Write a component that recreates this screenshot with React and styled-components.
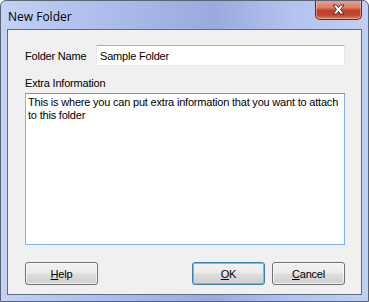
import styled, { createGlobalStyle } from "styled-components";

const GlobalStyle = createGlobalStyle`
  html, body {
    margin: 0;
    padding: 0;
    background: #ffffff;
  }
  body {
    font-family: "Liberation Sans", Arial, sans-serif;
  }
`;

export default function App() {
  return (
    <>
      <GlobalStyle />
      <Window>
        <TitleBar>
          <Title>New Folder</Title>
          <CloseButton aria-label="Close">
            <svg width="15" height="11" viewBox="0 0 15 11">
              <path
                d="M2 1 L5.5 1 L7.5 3.5 L9.5 1 L13 1 L9.5 5.5 L13 10 L9.5 10 L7.5 7.5 L5.5 10 L2 10 L5.5 5.5 Z"
                fill="#ffffff"
                stroke="#4a2a2a"
                strokeWidth="1"
                strokeLinejoin="round"
              />
            </svg>
          </CloseButton>
        </TitleBar>
        <Client>
          <Row>
            <Label width="71">Folder Name</Label>
            <TextInput defaultValue="Sample Folder" />
          </Row>
          <Field>
            <Label>Extra Information</Label>
            <TextArea
              focused
              defaultValue="This is where you can put extra information that you want to attach to this folder"
            />
          </Field>
          <ButtonRow>
            <Button>
              <u>H</u>elp
            </Button>
            <Spacer />
            <Button primary>
              <u>O</u>K
            </Button>
            <Button>
              <u>C</u>ancel
            </Button>
          </ButtonRow>
        </Client>
      </Window>
    </>
  );
}

const Window = styled.div`
  box-sizing: border-box;
  width: 369px;
  height: 302px;
  border: 1px solid #5a6475;
  border-radius: 6px 6px 0 0;
  background: linear-gradient(
    90deg,
    #c4d2f3 0%,
    #b3c2ee 20%,
    #a2b2e4 45%,
    #9aaade 58%,
    #b4c3ef 80%,
    #c1cff3 100%
  );
  display: flex;
  flex-direction: column;
  padding: 0 6px 6px 6px;
  overflow: hidden;
`;

const TitleBar = styled.div`
  height: 28px;
  display: flex;
  align-items: flex-start;
  justify-content: space-between;
`;

const Title = styled.div`
  font-family: "Open Sans", "Noto Sans", sans-serif;
  font-size: 12px;
  color: #000000;
  margin-top: 7px;
  margin-left: 1px;
`;

const CloseButton = styled.div`
  box-sizing: border-box;
  width: 47px;
  height: 20px;
  margin-top: -1px;
  border: 1px solid #5b2a24;
  border-top: none;
  border-radius: 0 0 5px 5px;
  background: linear-gradient(
    180deg,
    #e8a493 0%,
    #d97f68 40%,
    #c23f27 55%,
    #c4462e 80%,
    #db8068 100%
  );
  display: flex;
  align-items: center;
  justify-content: center;
  box-shadow: inset 0 0 0 1px rgba(255, 210, 190, 0.5);
`;

const Client = styled.div`
  flex: 1;
  box-sizing: border-box;
  background: #f0f0f0;
  border: 1px solid #5f6d84;
  padding: 15px 16px 9px 17px;
  display: flex;
  flex-direction: column;
  font-size: 11px;
  letter-spacing: -0.2px;
  color: #000000;
`;

const Row = styled.div`
  display: flex;
  align-items: center;
`;

const Field = styled.div`
  display: flex;
  flex-direction: column;
  margin-top: 11px;
  gap: 4px;
  flex: 1;
`;

const Label = styled.span`
  font-size: 11px;
  white-space: nowrap;
  width: ${(p) => (p.width ? p.width + "px" : "auto")};
  flex-shrink: 0;
`;

const TextInput = styled.input`
  box-sizing: border-box;
  flex: 1;
  height: 21px;
  border: 1px solid #e3e9ef;
  border-top-color: #abadb3;
  background: #ffffff;
  font-family: "Liberation Sans", Arial, sans-serif;
  font-size: 11px;
  letter-spacing: -0.2px;
  padding: 0 3px;
  outline: none;
`;

const TextArea = styled.textarea`
  box-sizing: border-box;
  width: 100%;
  height: 152px;
  resize: none;
  border: 1px solid ${(p) => (p.focused ? "#7eb4ea" : "#e3e9ef")};
  border-top-color: ${(p) => (p.focused ? "#569de5" : "#abadb3")};
  background: #ffffff;
  font-family: "Liberation Sans", Arial, sans-serif;
  font-size: 11px;
  letter-spacing: -0.2px;
  line-height: 13px;
  padding: 2px 2px;
  outline: none;
  overflow: hidden;
`;

const ButtonRow = styled.div`
  display: flex;
  align-items: center;
  gap: 7px;
  margin-top: 15px;
`;

const Spacer = styled.div`
  flex: 1;
`;

const Button = styled.div`
  box-sizing: border-box;
  width: 73px;
  height: 23px;
  border: 1px solid ${(p) => (p.primary ? "#3c7fb1" : "#707070")};
  border-radius: 3px;
  background: linear-gradient(
    180deg,
    #f2f2f2 0%,
    #ebebeb 48%,
    #dddddd 52%,
    #cfcfcf 100%
  );
  box-shadow: inset 0 0 0 1px
    ${(p) => (p.primary ? "#48d0f8" : "rgba(255, 255, 255, 0.7)")};
  display: flex;
  align-items: center;
  justify-content: center;
  font-size: 11px;
  color: #000000;
  u {
    text-decoration: underline;
  }
`;
